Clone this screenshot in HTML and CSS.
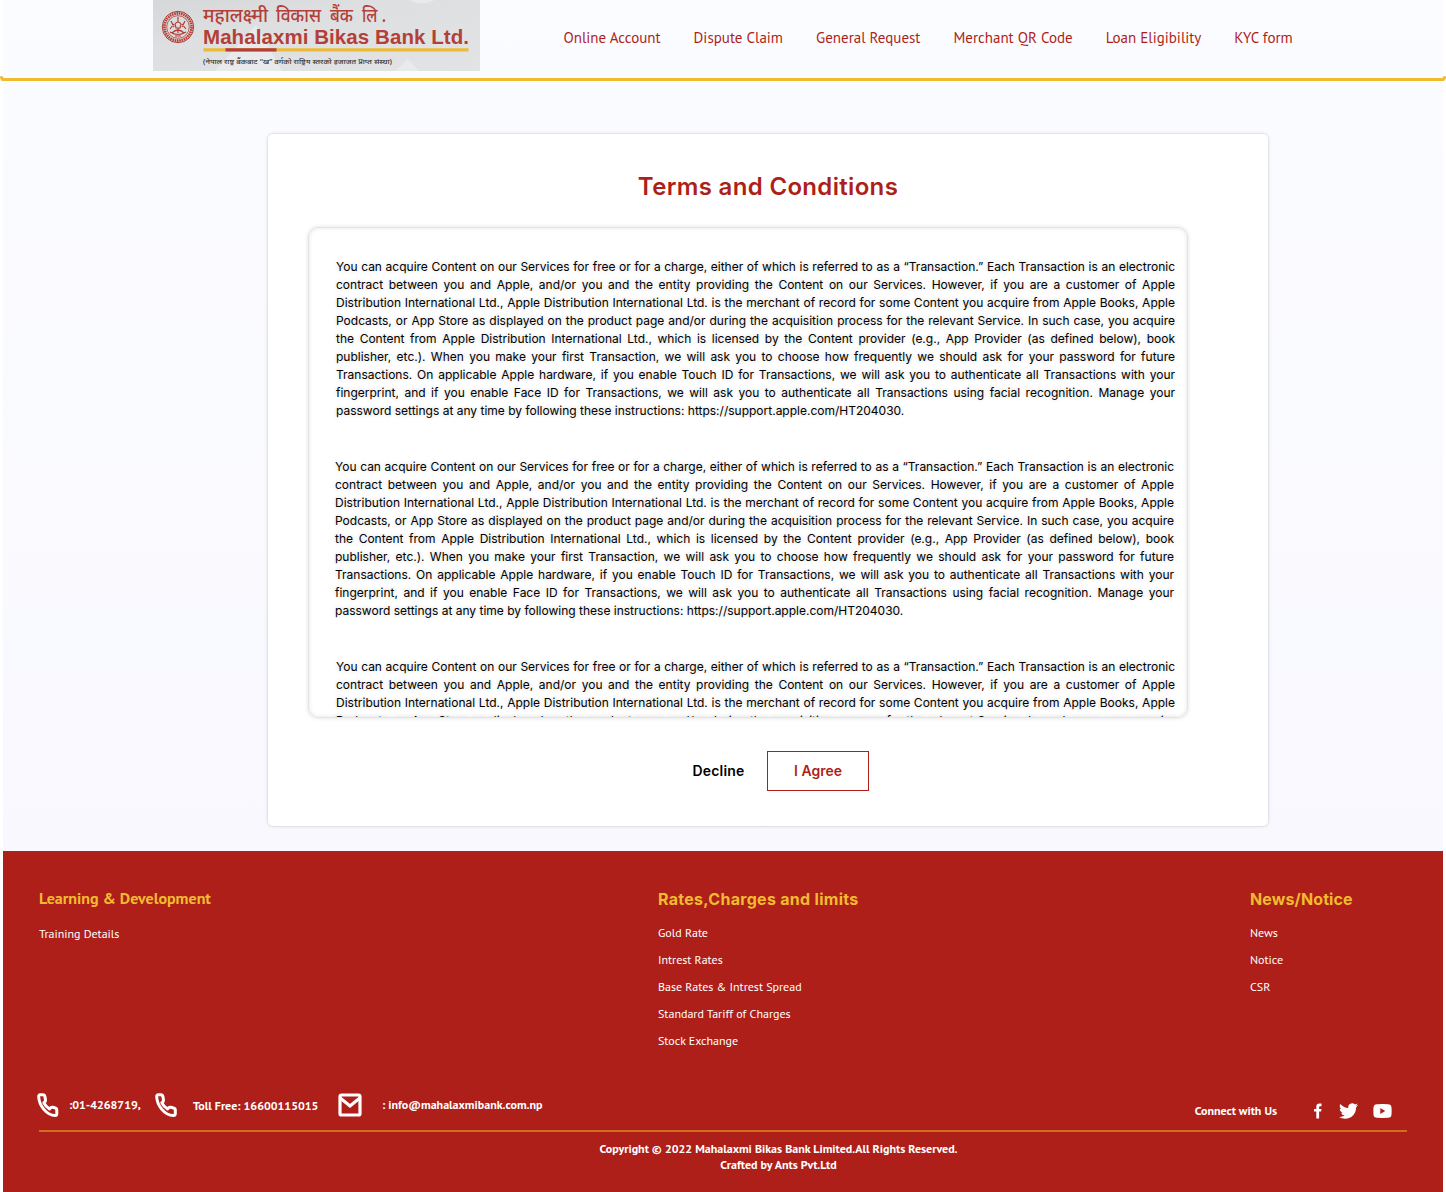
FILE: index.html
```html
<!DOCTYPE html>
<html lang="en">
<head>
<meta charset="utf-8">
<title>Terms and Conditions - Mahalaxmi Bikas Bank Ltd.</title>
<link rel="stylesheet" href="styles.css">
</head>
<body>
<div class="page">
  <header class="header">
    <svg class="logo" width="327" height="71" viewBox="0 0 327 71" role="img" aria-label="Mahalaxmi Bikas Bank Ltd.">
      <defs>
        <linearGradient id="plate" x1="0" y1="0" x2="1" y2="1"><stop offset="0" stop-color="#d6d7d8"/><stop offset=".35" stop-color="#dedfe0"/><stop offset="1" stop-color="#e2e3e5"/></linearGradient>
      </defs>
      <rect width="327" height="71" fill="url(#plate)"/>
      <path d="M62 71 103 25l26 46zM242 71l13-12 11 12zM256 0h26q-13 7-26 0z" fill="#e9eaec"/>
      <g fill="none" stroke="#b23c35">
        <circle cx="25" cy="27" r="15.7" stroke-width="1"/>
        <circle cx="25" cy="27" r="13.6" stroke-width="2.6" stroke-dasharray="1.6 .7"/>
        <circle cx="25" cy="27" r="11.3" stroke-width=".8"/>
        <path d="M25 17v5m-3 2q3-4 6 0l-1 4h-4zM21 24l-4 5m12-5 4 5M19 33q6-6 12 0M17 32q8 5 16 0M21 27l-3-6m11 6 3-6M25 28v5M22 36h6" stroke-width="1.2"/>
      </g>
      <g fill="#b23f38">
        <text class="logo-np" x="50" y="22" textLength="65" lengthAdjust="spacingAndGlyphs">महालक्ष्मी</text>
        <text class="logo-np" x="123" y="22" textLength="45" lengthAdjust="spacingAndGlyphs">विकास</text>
        <text class="logo-np" x="177" y="22" textLength="23" lengthAdjust="spacingAndGlyphs">बैंक</text>
        <text class="logo-np" x="209" y="22" textLength="24" lengthAdjust="spacingAndGlyphs">लि .</text>
        <text class="logo-en" x="50" y="43.6" textLength="266">Mahalaxmi Bikas Bank Ltd.</text>
      </g>
      <path d="M50.500 49.800H315.500" stroke="#ebba38" stroke-width="3.300"/>
      <path d="M72.500 49.800H123.500" stroke="#b23f38" stroke-width="3.300"/>
      <text class="logo-sub" x="50" y="64" textLength="189" lengthAdjust="spacingAndGlyphs">(नेपाल राष्ट्र बैंकबाट “ख” वर्गको राष्ट्रिय स्तरको इजाजत प्राप्त संस्था)</text>
    </svg>
    <nav class="nav">
      <a>Online Account</a><a>Dispute Claim</a><a>General Request</a><a>Merchant QR Code</a><a>Loan Eligibility</a><a>KYC form</a>
    </nav>
  </header>
  <svg class="rule" width="1446" height="8" viewBox="0 0 1446 8" aria-hidden="true"><path d="M1.500 3.500 2.500 5.500H1443.500L1444.500 3.500" fill="none" stroke="#f0bb2e" stroke-width="3" stroke-linecap="round" stroke-linejoin="round"/></svg>

  <main class="main">
    <section class="card">
      <h1>Terms and Conditions</h1>
      <div class="terms">
        <p>You can acquire Content on our Services for free or for a charge, either of which is referred to as a “Transaction.” Each Transaction is an electronic contract between you and Apple, and/or you and the entity providing the Content on our Services. However, if you are a customer of Apple Distribution International Ltd., Apple Distribution International Ltd. is the merchant of record for some Content you acquire from Apple Books, Apple Podcasts, or App Store as displayed on the product page and/or during the acquisition process for the relevant Service. In such case, you acquire the Content from Apple Distribution International Ltd., which is licensed by the Content provider (e.g., App Provider (as defined below), book publisher, etc.). When you make your first Transaction, we will ask you to choose how frequently we should ask for your password for future Transactions. On applicable Apple hardware, if you enable Touch ID for Transactions, we will ask you to authenticate all Transactions with your fingerprint, and if you enable Face ID for Transactions, we will ask you to authenticate all Transactions using facial recognition. Manage your password settings at any time by following these instructions: https://support.apple.com/HT204030.</p>
        <p class="outdent">You can acquire Content on our Services for free or for a charge, either of which is referred to as a “Transaction.” Each Transaction is an electronic contract between you and Apple, and/or you and the entity providing the Content on our Services. However, if you are a customer of Apple Distribution International Ltd., Apple Distribution International Ltd. is the merchant of record for some Content you acquire from Apple Books, Apple Podcasts, or App Store as displayed on the product page and/or during the acquisition process for the relevant Service. In such case, you acquire the Content from Apple Distribution International Ltd., which is licensed by the Content provider (e.g., App Provider (as defined below), book publisher, etc.). When you make your first Transaction, we will ask you to choose how frequently we should ask for your password for future Transactions. On applicable Apple hardware, if you enable Touch ID for Transactions, we will ask you to authenticate all Transactions with your fingerprint, and if you enable Face ID for Transactions, we will ask you to authenticate all Transactions using facial recognition. Manage your password settings at any time by following these instructions: https://support.apple.com/HT204030.</p>
        <p>You can acquire Content on our Services for free or for a charge, either of which is referred to as a “Transaction.” Each Transaction is an electronic contract between you and Apple, and/or you and the entity providing the Content on our Services. However, if you are a customer of Apple Distribution International Ltd., Apple Distribution International Ltd. is the merchant of record for some Content you acquire from Apple Books, Apple Podcasts, or App Store as displayed on the product page and/or during the acquisition process for the relevant Service. In such case, you acquire the Content</p>
      </div>
      <div class="actions">
        <button class="decline">Decline</button>
        <button class="agree">I Agree</button>
      </div>
    </section>
  </main>

  <footer class="footer">
    <div class="columns">
      <div class="col">
        <h2 class="pt">Learning &amp; Development</h2>
        <ul class="low"><li>Training Details</li></ul>
      </div>
      <div class="col">
        <h2>Rates,Charges and limits</h2>
        <ul><li>Gold Rate</li><li>Intrest Rates</li><li>Base Rates &amp; Intrest Spread</li><li>Standard Tariff of Charges</li><li>Stock Exchange</li></ul>
      </div>
      <div class="col">
        <h2 class="news">News/Notice</h2>
        <ul><li>News</li><li>Notice</li><li>CSR</li></ul>
      </div>
    </div>
    <div class="contact">
      <svg class="phone" width="22" height="25" viewBox="0 0 22 25"><path d="M3.200 1.800H5.800Q7.600 1.800 7.900 3.600L8.500 6.900Q8.700 8.400 7.300 9.300L6.800 9.700Q8.800 14 12.500 16L13.400 15Q14.400 14 15.800 14.300L18.500 15Q19.800 15.400 19.800 17V20.500Q19.800 22.500 18.300 22.500Q12 22.500 6.800 16.400Q2 10.600 1.700 3.800Q1.600 1.800 3.200 1.800Z"/></svg>
      <span class="tel">:01-4268719,</span>
      <svg class="phone" width="22" height="25" viewBox="0 0 22 25"><path d="M3.200 1.800H5.800Q7.600 1.800 7.900 3.600L8.500 6.900Q8.700 8.400 7.300 9.300L6.800 9.700Q8.800 14 12.500 16L13.400 15Q14.400 14 15.800 14.300L18.500 15Q20.300 15.400 20.300 17V20.500Q20.300 22.500 18.300 22.500Q12 22.500 6.800 16.400Q2 10.600 1.700 3.800Q1.600 1.800 3.200 1.800Z"/></svg>
      <span class="toll">Toll Free: 16600115015</span>
      <svg class="mail" width="24" height="24" viewBox="0 0 24 24"><rect x="2" y="2" width="20" height="20" rx="1.600"/><path d="M2.500 5.300 12 13l9.500-7.700"/></svg>
      <span class="email">: info@mahalaxmibank.com.np</span>
      <span class="connect">Connect with Us</span>
      <svg class="social fb" width="8" height="16" viewBox="0 0 8 16"><path d="M7.500.5V3.200H6Q5.100 3.200 5.100 4.100V6H7.500L7.100 8.500H5.100V15.500H2.300V8.500H0V6H2.300V3.800Q2.300.5 5.500.5Z"/></svg>
      <svg class="social tw" width="19" height="16" viewBox="0 2 24 20"><path d="M23.953 4.570a10 10 0 01-2.825.775 4.958 4.958 0 002.163-2.723c-.951.555-2.005.959-3.127 1.184a4.920 4.920 0 00-8.384 4.482C7.690 8.095 4.067 6.130 1.640 3.162a4.822 4.822 0 00-.666 2.475c0 1.710.870 3.213 2.188 4.096a4.904 4.904 0 01-2.228-.616v.060a4.923 4.923 0 003.946 4.827 4.996 4.996 0 01-2.212.085 4.936 4.936 0 004.604 3.417 9.867 9.867 0 01-6.102 2.105c-.390 0-.779-.023-1.170-.067a13.995 13.995 0 007.557 2.209c9.053 0 13.998-7.496 13.998-13.985 0-.210 0-.420-.015-.630A9.935 9.935 0 0024 4.590z"/></svg>
      <svg class="social" width="19" height="14" viewBox="0 0 19 14"><path fill-rule="evenodd" d="M4 .2Q9.500-.1 15 .2Q18.300.3 18.500 3.500Q18.800 7 18.500 10.500Q18.300 13.700 15 13.800Q9.500 14.100 4 13.800Q.7 13.700.5 10.500Q.2 7 .5 3.500Q.7.300 4 .2ZM7.300 4V10L12.200 7Z"/></svg>
    </div>
    <div class="copyright">Copyright © 2022 Mahalaxmi Bikas Bank Limited.All Rights Reserved.<br>Crafted by Ants Pvt.Ltd</div>
  </footer>
</div>
</body>
</html>
```
FILE: styles.css
```css
* { box-sizing: border-box; }
body { margin: 0; background: #fff; font-family: "PT Sans", "Noto Sans", sans-serif; }
h1, h2, p, ul { margin: 0; padding: 0; }
ul { list-style: none; }

.page {
  width: 1446px; height: 1192px; display: flex; flex-direction: column; overflow: hidden;
  background: linear-gradient(#fbfcff, #f8f8fe 860px) 3px 0 / 1440px 100% no-repeat;
}

.header { height: 75px; display: flex; align-items: flex-start; padding-left: 153px; flex: none; }
.logo { display: block; flex: none; margin-right: 83.500px; }
.logo-np { font: 500 19.500px/1 "Noto Sans", sans-serif; }
.logo-en { font: 700 20.500px/1 "Liberation Sans", sans-serif; }
.logo-sub { font: 500 7px/1 "Noto Sans", sans-serif; fill: #333; }
.nav { display: flex; gap: 33px; height: 75px; align-items: center; font-size: 15px; line-height: 20px; color: #ae1f19; white-space: nowrap; }
.rule { display: block; flex: none; margin-top: -1px; }

.main { height: 769px; flex: none; padding: 52px 0 0 268px; }
.card {
  width: 1000px; height: 692px; background: #fff; border-radius: 5px;
  box-shadow: 0 0 0 1px rgba(0, 0, 0, .04), 0 0 4px rgba(0, 0, 0, .13);
  font-family: Inter, sans-serif; font-optical-sizing: none;
}
h1 { padding-top: 38px; font-size: 24px; line-height: 30px; font-weight: 590; letter-spacing: .33px; color: #ae1f19; text-align: center; height: 93px; }
.terms {
  width: 880px; height: 491px; margin-left: 40px; padding: 30px 12px 0 27px; overflow: hidden;
  border: 1px solid #e4e4e4; border-radius: 10px;
  box-shadow: 0 0 4px rgba(0, 0, 0, .13), inset 0 0 4px rgba(0, 0, 0, .11);
}
.terms p { width: 839px; margin-bottom: 38px; font-size: 12px; line-height: 18px; text-align: justify; color: #000; text-shadow: 0 0 4px rgba(0, 0, 0, .2); }
.terms .outdent { margin-left: -1px; }
.actions { display: flex; align-items: center; margin: 33px 0 0 424px; }
button { font: 600 14px/18px Inter, sans-serif; background: none; border: 0; padding: 0; margin: 0; }
.decline { width: 53px; margin-right: 22px; white-space: nowrap; letter-spacing: .2px; color: #000; }
.agree { width: 102px; height: 40px; border: 1px solid #ae1f19; color: #ae1f19; }

.footer { flex: 1; margin: 0 3px; background: #ae1f19; color: #fff; padding: 38px 36px 0; }
.columns { display: grid; grid-template-columns: 619px 592px 1fr; height: 203px; }
h2 { font: 650 16px/20px Inter, sans-serif; font-optical-sizing: none; letter-spacing: .29px; color: #f0bb2e; white-space: nowrap; }
h2.news { letter-spacing: .12px; }
h2.pt { font: 700 16px/20px "PT Sans", sans-serif; letter-spacing: 0; margin-top: -1px; }
.col ul { margin-top: 10px; font-size: 12px; line-height: 27px; }
.col .low { margin-top: 12px; }
.contact { display: flex; align-items: center; height: 40px; border-bottom: 2px solid #cf6d20; font-size: 12px; font-weight: 700; line-height: 16px; white-space: nowrap; padding-bottom: 12px; }
.contact svg { flex: none; }
.phone { margin-left: -2px; fill: none; stroke: #fff; stroke-width: 3; stroke-linejoin: round; }
.tel { width: 86px; margin-left: 10px; }
.tel + .phone { margin-left: 0; }
.toll { width: 126px; margin: 2px 0 0 16px; }
.mail { margin-left: 19px; fill: none; stroke: #fff; stroke-width: 3.200; }
.email { margin-left: 20px; }
.connect { margin: 12px 37px 0 auto; }
.social { fill: #fff; margin: 12px 15px 0 0; }
.fb { margin-right: 17px; }
.tw { margin-right: 15px; }
.copyright { padding: 9px 0 0 111px; text-align: center; font-size: 12px; font-weight: 700; line-height: 16px; }
```
